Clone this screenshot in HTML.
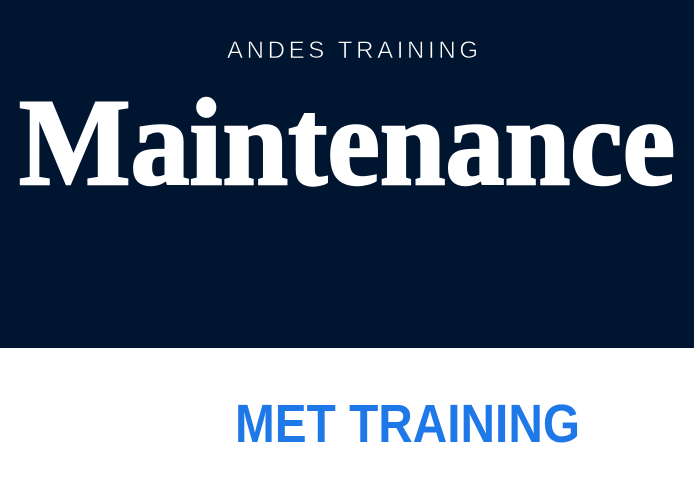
<!DOCTYPE html>
<html><head><style>
html,body{margin:0;padding:0;width:694px;height:482px;overflow:hidden;background:#fff}
svg{display:block}
</style></head><body>
<svg width="694" height="482" xmlns="http://www.w3.org/2000/svg">
<rect x="0" y="0" width="694" height="348" fill="#001530"/>
<text x="227" y="58" font-family="Liberation Sans, sans-serif" font-size="24" fill="#fff" textLength="251" lengthAdjust="spacing" stroke="#001530" stroke-width="0.6">ANDES TRAINING</text>
<text x="19" y="184" font-family="Liberation Serif, serif" font-weight="bold" font-size="124" fill="#fff" stroke="#fff" stroke-width="2.5" textLength="656" lengthAdjust="spacingAndGlyphs">Maintenance</text>
<text x="235" y="442" font-family="Liberation Sans, sans-serif" font-weight="bold" font-size="54" fill="#1f78e8" textLength="345" lengthAdjust="spacingAndGlyphs">MET TRAINING</text>
</svg>
</body></html>
